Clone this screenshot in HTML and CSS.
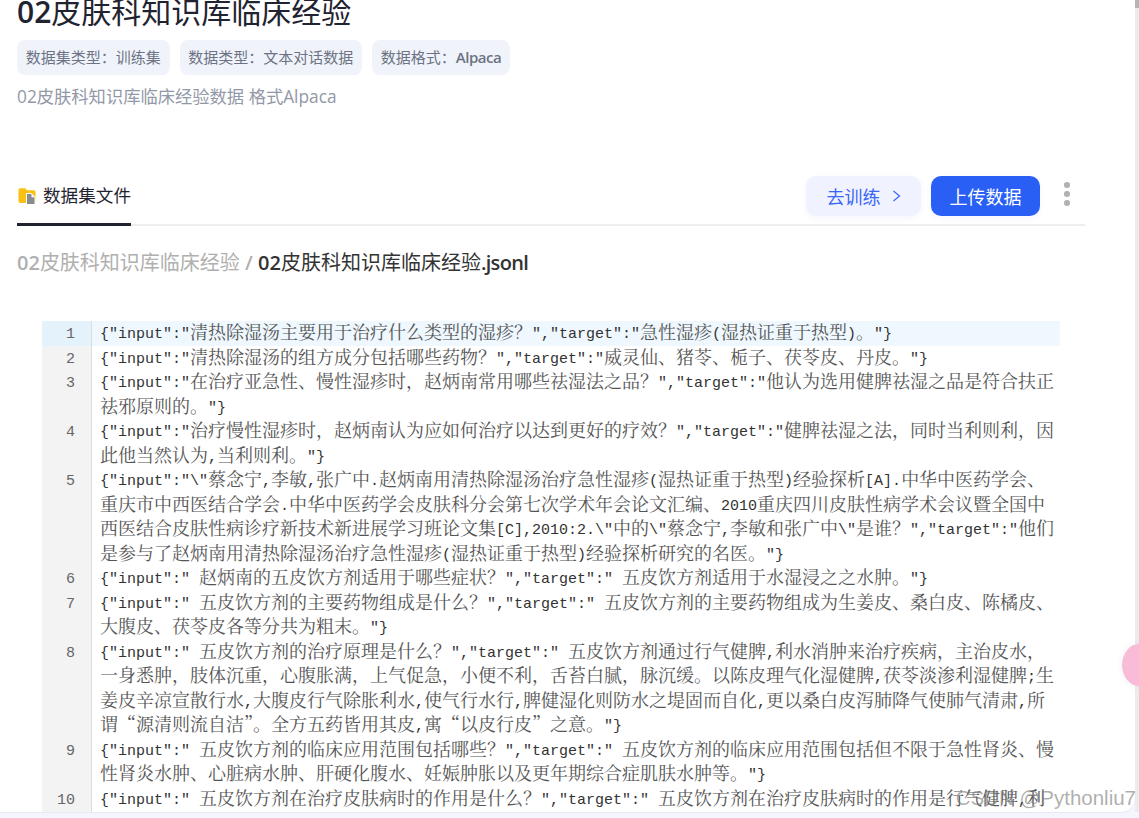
FILE: index.html
```html
<!DOCTYPE html>
<html lang="zh-CN">
<head>
<meta charset="utf-8">
<title>02皮肤科知识库临床经验</title>
<link rel="stylesheet" href="styles.css">
</head>
<body>
<div class="page">
  <main class="panel">
    <h1 class="title"><b>02</b>皮肤科知识库临床经验</h1>
    <div class="chips">
      <span class="chip">数据集类型：训练集</span>
      <span class="chip">数据类型：文本对话数据</span>
      <span class="chip">数据格式：<b>Alpaca</b></span>
    </div>
    <p class="desc">02皮肤科知识库临床经验数据 格式Alpaca</p>
    <div class="tabbar">
      <div class="tab">
        <svg class="tab-icon" width="18" height="17" viewBox="0 0 18 17"><path d="M.5 2a1.700 1.700 0 0 1 1.700-1.700h5.300l1.500 1.900h6.800a1.700 1.700 0 0 1 1.700 1.700v9.400a1.700 1.700 0 0 1-1.700 1.700h-13.600a1.700 1.700 0 0 1-1.700-1.700z" fill="#f9c113"/><path d="M8.500 5.500h4.700l3.800 3.800v7.200h-8.500z" fill="#8b8b8b" stroke="#fff" stroke-width="1"/><path d="M13.500 5.800v3.500h3.300z" fill="#fff"/></svg>
        <span>数据集文件</span>
      </div>
      <div class="actions">
        <button class="btn btn-soft">去训练<svg class="chev" width="9" height="12" viewBox="0 0 9 12"><path d="M1.500 1l6 5-6 5" fill="none" stroke="#3a66f5" stroke-width="1.200"/></svg></button>
        <button class="btn btn-primary">上传数据</button>
        <div class="more"><i></i><i></i><i></i></div>
      </div>
    </div>
    <div class="crumb"><span class="crumb-muted"><b>02</b>皮肤科知识库临床经验 <b>/</b></span> <b>02</b>皮肤科知识库临床经验<b class="ext">.jsonl</b></div>
    <div class="editor">
      <div class="ln active"><code>1</code></div><div class="code active"><code>{"input":"</code>清热除湿汤主要用于治疗什么类型的湿疹？<code>","target":"</code>急性湿疹<code>(</code>湿热证重于热型<code>)</code>。<code>"}</code></div>
      <div class="ln"><code>2</code></div><div class="code"><code>{"input":"</code>清热除湿汤的组方成分包括哪些药物？<code>","target":"</code>威灵仙、猪苓、栀子、茯苓皮、丹皮。<code>"}</code></div>
      <div class="ln"><code>3</code></div><div class="code"><code>{"input":"</code>在治疗亚急性、慢性湿疹时，赵炳南常用哪些祛湿法之品？<code>","target":"</code>他认为选用健脾祛湿之品是符合扶正祛邪原则的。<code>"}</code></div>
      <div class="ln"><code>4</code></div><div class="code"><code>{"input":"</code>治疗慢性湿疹时，赵炳南认为应如何治疗以达到更好的疗效？<code>","target":"</code>健脾祛湿之法，同时当利则利，因此他当然认为<code>,</code>当利则利。<code>"}</code></div>
      <div class="ln"><code>5</code></div><div class="code"><code>{"input":"\"</code>蔡念宁<code>,</code>李敏<code>,</code>张广中<code>.</code>赵炳南用清热除湿汤治疗急性湿疹<code>(</code>湿热证重于热型<code>)</code>经验探析<code>[A].</code>中华中医药学会、重庆市中西医结合学会<code>.</code>中华中医药学会皮肤科分会第七次学术年会论文汇编、<code>2010</code>重庆四川皮肤性病学术会议暨全国中西医结合皮肤性病诊疗新技术新进展学习班论文集<code>[C],2010:2.\"</code>中的<code>\"</code>蔡念宁<code>,</code>李敏和张广中<code>\"</code>是谁？<code>","target":"</code>他们是参与了赵炳南用清热除湿汤治疗急性湿疹<code>(</code>湿热证重于热型<code>)</code>经验探析研究的名医。<code>"}</code></div>
      <div class="ln"><code>6</code></div><div class="code"><code>{"input":" </code>赵炳南的五皮饮方剂适用于哪些症状？<code>","target":" </code>五皮饮方剂适用于水湿浸之之水肿。<code>"}</code></div>
      <div class="ln"><code>7</code></div><div class="code"><code>{"input":" </code>五皮饮方剂的主要药物组成是什么？<code>","target":" </code>五皮饮方剂的主要药物组成为生姜皮、桑白皮、陈橘皮、大腹皮、茯苓皮各等分共为粗末。<code>"}</code></div>
      <div class="ln"><code>8</code></div><div class="code"><code>{"input":" </code>五皮饮方剂的治疗原理是什么？<code>","target":" </code>五皮饮方剂通过行气健脾<code>,</code>利水消肿来治疗疾病，主治皮水，一身悉肿，肢体沉重，心腹胀满，上气促急，小便不利，舌苔白腻，脉沉缓。以陈皮理气化湿健脾<code>,</code>茯苓淡渗利湿健脾<code>;</code>生姜皮辛凉宣散行水<code>,</code>大腹皮行气除胀利水<code>,</code>使气行水行<code>,</code>脾健湿化则防水之堤固而自化<code>,</code>更以桑白皮泻肺降气使肺气清肃<code>,</code>所谓<span class="zh">“</span>源清则流自洁<span class="zh">”</span>。全方五药皆用其皮<code>,</code>寓<span class="zh">“</span>以皮行皮<span class="zh">”</span>之意。<code>"}</code></div>
      <div class="ln"><code>9</code></div><div class="code"><code>{"input":" </code>五皮饮方剂的临床应用范围包括哪些？<code>","target":" </code>五皮饮方剂的临床应用范围包括但不限于急性肾炎、慢性肾炎水肿、心脏病水肿、肝硬化腹水、妊娠肿胀以及更年期综合症肌肤水肿等。<code>"}</code></div>
      <div class="ln"><code>10</code></div><div class="code"><code>{"input":" </code>五皮饮方剂在治疗皮肤病时的作用是什么？<code>","target":" </code>五皮饮方剂在治疗皮肤病时的作用是行气健脾<code>,</code>利水消肿。<code>"}</code></div>
    </div>
  </main>
  <div class="scrollbar"><div class="thumb"></div></div>
  <div class="float-ball"></div>
  <div class="watermark">CSDN @Pythonliu7</div>
</div>
</body>
</html>
```
FILE: styles.css
```css
* { box-sizing: border-box; }
html, body { margin: 0; height: 100%; overflow: hidden; }
body { background: #f5f6fd; font-family: "Open Sans", "Noto Sans CJK SC", sans-serif; color: #1f2430; }
.page { position: relative; display: flex; height: 818px; align-items: flex-start; }
.panel { flex: 1; height: 812px; min-width: 0; background: #fff; overflow: hidden; padding-left: 17px; border-bottom-right-radius: 14px; box-shadow: 0 1px 0 #e6e8f8; }
.scrollbar { width: 4px; height: 812px; background: #ececec; }
.thumb { height: 8px; background: #b5b5b5; }
.title { margin: -9px 0 0; font-size: 30px; line-height: 42px; font-weight: 400; color: #1f2430; }
.title b { font-weight: 600; }
.chips { display: flex; gap: 10px; margin-top: 7px; }
.chip { height: 35px; line-height: 35px; padding: 0 8.750px; border-radius: 8px; background: #f0f3fa; color: #6c7385; font-size: 15px; }
.chip b { font-weight: 600; letter-spacing: -.5px; }
.desc { margin: 9px 0 0; font-size: 17.300px; line-height: 26px; color: #9298a8; }
.tabbar { display: flex; justify-content: space-between; width: 1068px; height: 50px; margin-top: 66px; border-bottom: 2px solid #eeeeee; }
.tab { display: flex; align-items: flex-start; gap: 7px; width: 114px; height: 50px; border-bottom: 3px solid #1f2430; font-size: 17.600px; line-height: 26px; color: #1f2430; padding-top: 6px; white-space: nowrap; }
.tab-icon { margin: 6px 0 0 1px; flex: none; }
.actions { display: flex; gap: 10px; align-items: flex-start; padding-right: 16px; }
.btn { height: 40px; border: 0; border-radius: 10px; font: inherit; font-size: 18px; display: flex; align-items: center; justify-content: center; box-shadow: 0 2px 6px rgba(60, 100, 240, .06); }
.btn-soft { width: 115px; background: #f0f3ff; color: #3a66f5; gap: 11px; }
.btn-primary { width: 109px; background: #2a5ff6; color: #fff; }
.more { display: flex; flex-direction: column; gap: 3.500px; width: 5px; margin: 6px 0 0 14px; }
.more i { display: block; width: 5.500px; height: 5.500px; border-radius: 50%; background: #b2b2b2; }
.crumb { margin-top: 22px; font-size: 20px; line-height: 30px; color: #333; }
.crumb b { font-weight: 600; }
.crumb .ext { letter-spacing: -.7px; }
.crumb-muted { color: #b0b0b0; }
.editor { display: grid; grid-template-columns: 50px 1fr; width: 1018px; margin: 43px 0 0 25px; font-family: "Liberation Sans", "Noto Serif CJK SC", serif; font-size: 18px; line-height: 24.500px; color: #555; }
.editor code { font-family: "Liberation Mono", monospace; font-size: 15px; line-height: 1; color: #333; vertical-align: 1px; }
.editor .zh { font-family: "Noto Serif CJK SC", serif; line-height: 1; }
.ln { background: #f3f3f3; border-right: 1px solid #dddddd; padding-right: 16px; text-align: right; }
.editor .ln code { color: #666; }
.ln.active { background: #e4f2fb; }
.code { padding-left: 8px; word-break: break-all; }
.code.active { background: #eef8fe; }
.float-ball { position: absolute; right: -17px; top: 644px; width: 34px; height: 42px; border-radius: 50%; background: #f9bcd8; box-shadow: 0 0 8px rgba(0, 0, 0, .06); }
.watermark { position: absolute; right: 3px; top: 785px; font-family: "Liberation Sans", sans-serif; font-size: 20.500px; line-height: 26px; color: rgba(120, 120, 120, .6); white-space: nowrap; }
```
